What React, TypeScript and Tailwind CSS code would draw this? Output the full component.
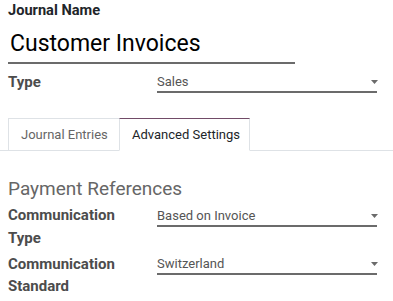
const Caret = () => (
  <svg width="7" height="4" viewBox="0 0 7 4" className="shrink-0 -mr-[1px]">
    <path d="M0 0 H7 L3.5 4 Z" fill="#6b6b6b" />
  </svg>
);

const Select = ({ value }: { value: string }) => (
  <div className="flex-1 flex items-center justify-between border-b-2 border-[#6b6b6b] text-[13px] leading-[19px] text-[#555]">
    <span>{value}</span>
    <Caret />
  </div>
);

const App = () => {
  return (
    <div className="w-[393px] h-[301px] overflow-hidden bg-white pl-2 pr-4 font-['Roboto',sans-serif]">
      {/* Title */}
      <div className="text-[14.6px] leading-[21px] font-bold text-[#212529]">Journal Name</div>
      <div className="mt-[5px] w-[287px] border-b-2 border-[#6b6b6b] pl-[2px] text-[23px] leading-[36px] text-black">
        Customer Invoices
      </div>

      {/* Type */}
      <div className="mt-2 flex items-start">
        <div className="w-[149px] text-[15px] leading-[21px] font-bold text-[#4c4c4c]">Type</div>
        <Select value="Sales" />
      </div>

      {/* Tabs */}
      <div className="mt-[25px] -ml-2 -mr-4 pl-2 flex border-b border-[#dee2e6]">
        <div className="-mb-px w-[111px] h-[33px] border-t border-l border-[#dee2e6] pl-3 flex items-center text-[13px] text-[#666]">
          Journal Entries
        </div>
        <div className="-mb-px w-[131px] h-[33px] border border-[#dee2e6] border-t-[#714b67] border-b-white pl-3 flex items-center text-[13px] text-[#212529]">
          Advanced Settings
        </div>
      </div>

      {/* Payment references */}
      <div className="mt-[24px] text-[19px] leading-[27px] text-[#666]">Payment References</div>

      <div className="mt-[2px] flex items-start">
        <div className="w-[149px] text-[15px] leading-[23px] font-bold text-[#4c4c4c]">
          Communication
          <br />
          Type
        </div>
        <div className="flex-1 pt-[2px]">
          <Select value="Based on Invoice" />
        </div>
      </div>

      <div className="mt-[3px] flex items-start">
        <div className="w-[149px] text-[15px] leading-[22px] font-bold text-[#4c4c4c]">
          Communication
          <br />
          Standard
        </div>
        <div className="flex-1 pt-[1px]">
          <Select value="Switzerland" />
        </div>
      </div>
    </div>
  );
};

export default App;
